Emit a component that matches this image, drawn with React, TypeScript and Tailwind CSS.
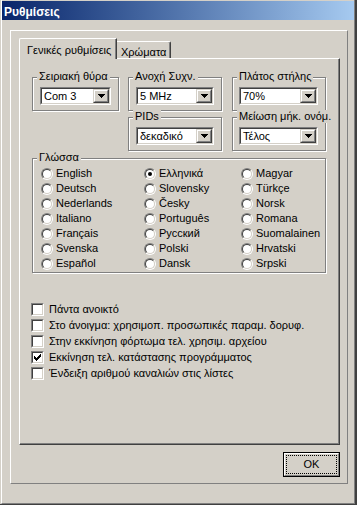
import React from 'react'

const raised = 'border-t-white border-l-white border-b-[#808080] border-r-[#808080]'

function Combo({ value, width }: { value: string; width: string }) {
  return (
    <div className={`h-[18px] border border-t-[#808080] border-l-[#808080] border-b-white border-r-white ${width}`}>
      <div className="flex h-full border border-t-[#404040] border-l-[#404040] border-b-[#d4d0c8] border-r-[#d4d0c8] bg-white">
        <span className="flex-1 pl-[2px] leading-[14px] whitespace-nowrap overflow-hidden">{value}</span>
        <div className="h-full w-[16px] border border-t-[#d4d0c8] border-l-[#d4d0c8] border-b-[#404040] border-r-[#404040] bg-[#d4d0c8]">
          <div className={`flex h-full items-center justify-center border ${raised}`}>
            <svg width="7" height="4" viewBox="0 0 7 4" shapeRendering="crispEdges">
              <path d="M0 0h7v1H0zM1 1h5v1H1zM2 2h3v1H2zM3 3h1v1H3z" fill="#000" />
            </svg>
          </div>
        </div>
      </div>
    </div>
  )
}

function Group({ label, className, children }: { label: string; className: string; children?: React.ReactNode }) {
  return (
    <div className={`relative border border-[#808080] shadow-[inset_1px_1px_0_#fff,1px_1px_0_#fff] ${className}`}>
      <span className="absolute left-[4px] top-[-8px] bg-[#d4d0c8] px-[2px] leading-[13px] whitespace-nowrap">{label}</span>
      {children}
    </div>
  )
}

function Radio({ label, checked }: { label: string; checked?: boolean }) {
  return (
    <div className="flex h-[15px] items-center gap-[3px] whitespace-nowrap">
      <span className="block h-[12px] w-[12px] shrink-0 rounded-full border border-t-[#808080] border-l-[#808080] border-b-white border-r-white">
        <span className="flex h-full w-full items-center justify-center rounded-full border border-t-[#404040] border-l-[#404040] border-b-[#d4d0c8] border-r-[#d4d0c8] bg-white">
          {checked && <span className="block h-[4px] w-[4px] rounded-full bg-black" />}
        </span>
      </span>
      <span>{label}</span>
    </div>
  )
}

function Check({ label, checked }: { label: string; checked?: boolean }) {
  return (
    <div className="flex h-[16px] items-center gap-[5px] whitespace-nowrap">
      <span className="block h-[13px] w-[13px] shrink-0 border border-t-[#808080] border-l-[#808080] border-b-white border-r-white">
        <span className="flex h-full w-full items-center justify-center border border-t-[#404040] border-l-[#404040] border-b-[#d4d0c8] border-r-[#d4d0c8] bg-white">
          {checked && (
            <svg width="7" height="7" viewBox="0 0 7 7" shapeRendering="crispEdges">
              <path d="M0 2h1v3H0zM1 3h1v3H1zM2 4h1v3H2zM3 3h1v3H3zM4 2h1v3H4zM5 1h1v3H5zM6 0h1v3H6z" fill="#000" />
            </svg>
          )}
        </span>
      </span>
      <span>{label}</span>
    </div>
  )
}

const languages = [
  ['English', 'Deutsch', 'Nederlands', 'Italiano', 'Français', 'Svenska', 'Español'],
  ['Ελληνικά', 'Slovensky', 'Česky', 'Português', 'Русский', 'Polski', 'Dansk'],
  ['Magyar', 'Türkçe', 'Norsk', 'Romana', 'Suomalainen', 'Hrvatski', 'Srpski'],
]

const options = [
  { label: 'Πάντα ανοικτό' },
  { label: 'Στο άνοιγμα: χρησιμοπ. προσωπικές παραμ. δορυφ.' },
  { label: 'Στην εκκίνηση φόρτωμα τελ. χρησιμ. αρχείου' },
  { label: 'Εκκίνηση τελ. κατάστασης προγράμματος', checked: true },
  { label: 'Ένδειξη αριθμού καναλιών στις λίστες' },
]

export default function App() {
  return (
    <div className="h-[505px] w-[357px] border-r-2 border-b border-[#404040] bg-[#d4d0c8] pl-[1px] font-['Liberation_Sans',Arial,sans-serif] text-[11px] text-black">
      <div className="h-full border-l border-r border-b border-l-white border-r-[#808080] border-b-[#808080] pt-[1px]">
        {/* title bar */}
        <div className="flex h-[19px] items-center bg-gradient-to-r from-[#0a246a] to-[#a6caf0] pl-[2px] pt-[2px] text-[12px] font-bold text-white">
          Ρυθμίσεις
        </div>

        <div className={`ml-[8px] mt-[10px] h-[454px] w-[338px] border pl-[8px] pt-[7px] ${raised}`}>
          <div className="flex w-[321px] flex-col">
            {/* tabs */}
            <div className="flex h-[20px] items-end">
              <div className="relative z-10 -mb-px flex h-[21px] w-[98px] items-start rounded-tl-[2px] border-t border-l border-r border-t-white border-l-white border-r-[#404040] bg-[#d4d0c8] pl-[7px] pt-[3px] shadow-[inset_-1px_0_0_#808080]">
                Γενικές ρυθμίσεις
              </div>
              <div className="flex h-[17px] w-[54px] items-start rounded-tr-[2px] border-t border-r border-t-white border-r-[#404040] pl-[4px] pt-[2px] shadow-[inset_-1px_0_0_#808080]">
                Χρώματα
              </div>
            </div>

            {/* panel */}
            <div className="h-[387px] w-[321px] border border-t-white border-l-white border-b-[#404040] border-r-[#404040] pl-[12px] pt-[18px] shadow-[inset_-1px_-1px_0_#808080]">
              <div className="flex flex-col gap-[6px]">
                <div className="flex">
                  <Group label="Σειριακή θύρα" className="h-[34px] w-[87px] pl-[7px] pt-[9px]">
                    <Combo value="Com 3" width="w-[71px]" />
                  </Group>
                  <Group label="Ανοχή Συχν." className="ml-[9px] h-[34px] w-[94px] pl-[7px] pt-[9px]">
                    <Combo value="5 MHz" width="w-[78px]" />
                  </Group>
                  <Group label="Πλάτος στήλης" className="ml-[10px] h-[34px] w-[94px] pl-[6px] pt-[9px]">
                    <Combo value="70%" width="w-[79px]" />
                  </Group>
                </div>
                <div className="flex pl-[96px]">
                  <Group label="PIDs" className="h-[34px] w-[94px] pl-[7px] pt-[9px]">
                    <Combo value="δεκαδικό" width="w-[78px]" />
                  </Group>
                  <Group label="Μείωση μήκ. ονόμ." className="ml-[10px] h-[34px] w-[94px] pl-[6px] pt-[9px]">
                    <Combo value="Τέλος" width="w-[79px]" />
                  </Group>
                </div>
              </div>

              <Group label="Γλώσσα" className="mt-[7px] w-[294px] pb-[1px] pl-[8px] pt-[7px]">
                <div className="flex">
                  {languages.map((col, i) => (
                    <div key={i} className={i === 0 ? 'w-[103px]' : i === 1 ? 'w-[97px]' : 'flex-1'}>
                      {col.map((l) => (
                        <Radio key={l} label={l} checked={l === 'Ελληνικά'} />
                      ))}
                    </div>
                  ))}
                </div>
              </Group>

              <div className="-ml-px mt-[28px] flex flex-col">
                {options.map((o) => (
                  <Check key={o.label} label={o.label} checked={o.checked} />
                ))}
              </div>
            </div>

            {/* OK button */}
            <div className="mt-[7px] h-[25px] w-[57px] self-end border border-black">
              <div className="h-full border border-t-white border-l-white border-b-[#808080] border-r-[#808080] p-[1px]">
                <div className="flex h-full items-center justify-center border border-dotted border-black">
                  OK
                </div>
              </div>
            </div>
          </div>
        </div>
      </div>
    </div>
  )
}
